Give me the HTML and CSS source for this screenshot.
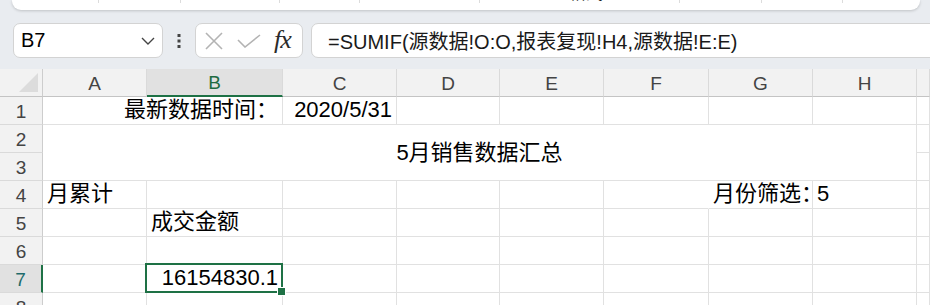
FILE: index.html
```html
<!DOCTYPE html>
<html lang="zh-CN">
<head>
  <meta charset="UTF-8">
  <title>报表复现</title>
<link rel="stylesheet" href="styles.css">
</head>
<body>
<div class="ribbon">
  <div class="group g-1"></div>
  <div class="group g-2"></div>
  <div class="group g-3"></div>
  <div class="group g-4"></div>
  <div class="group g-5"></div>
  <div class="group g-6"><span class="group-label">格式</span></div>
  <div class="group g-7"></div>
  <div class="group g-8"></div>
</div>

<div class="fbar">
  <div class="namebox">
    <span>B7</span>
    <svg class="chevron" width="14" height="8" viewBox="0 0 14 8"><path d="M1 1l6 6 6-6" fill="none" stroke="#444" stroke-width="1.4"/></svg>
  </div>
  <div class="more">
    <svg width="4" height="14" viewBox="0 0 4 14"><rect x="0.5" y="0" width="3" height="3" fill="#444"/><rect x="0.5" y="5.5" width="3" height="3" fill="#444"/><rect x="0.5" y="11" width="3" height="3" fill="#444"/></svg>
  </div>
  <div class="fxbox">
    <svg class="cancel" width="18" height="18" viewBox="0 0 18 18"><path d="M1 1l16 16M17 1L1 17" fill="none" stroke="#b3b3b3" stroke-width="1.6"/></svg>
    <svg class="enter" width="24" height="14" viewBox="0 0 24 14"><path d="M1 6l7 7L23 1" fill="none" stroke="#b3b3b3" stroke-width="1.6"/></svg>
    <span class="fx">fx</span>
  </div>
  <div class="formula">=SUMIF(源数据!O:O,报表复现!H4,源数据!E:E)</div>
</div>

<div class="sheet">
  <div class="corner"></div>
  <div class="colhead">A</div>
  <div class="colhead active">B</div>
  <div class="colhead">C</div>
  <div class="colhead">D</div>
  <div class="colhead">E</div>
  <div class="colhead">F</div>
  <div class="colhead">G</div>
  <div class="colhead">H</div>
  <div class="colhead"></div>

  <div class="rowhead">1</div>
  <div class="cell right span-2">最新数据时间：</div>
  <div class="cell right">2020/5/31</div>
  <div class="cell"></div><div class="cell"></div><div class="cell"></div><div class="cell"></div><div class="cell"></div><div class="cell"></div>

  <div class="rowhead">2</div>
  <div class="cell title">5月销售数据汇总</div>
  <div class="cell"></div>
  <div class="rowhead">3</div>
  <div class="cell"></div>

  <div class="rowhead">4</div>
  <div class="cell">月累计</div>
  <div class="cell"></div><div class="cell"></div><div class="cell"></div><div class="cell"></div>
  <div class="cell open"></div>
  <div class="cell">月份筛选：</div>
  <div class="cell">5</div>
  <div class="cell"></div>

  <div class="rowhead">5</div>
  <div class="cell"></div>
  <div class="cell">成交金额</div>
  <div class="cell"></div><div class="cell"></div><div class="cell"></div><div class="cell"></div><div class="cell"></div><div class="cell"></div><div class="cell"></div>

  <div class="rowhead">6</div>
  <div class="cell"></div><div class="cell"></div><div class="cell"></div><div class="cell"></div><div class="cell"></div><div class="cell"></div><div class="cell"></div><div class="cell"></div><div class="cell"></div>

  <div class="rowhead active">7</div>
  <div class="cell"></div>
  <div class="cell right selected">16154830.1</div>
  <div class="cell"></div><div class="cell"></div><div class="cell"></div><div class="cell"></div><div class="cell"></div><div class="cell"></div><div class="cell"></div>

  <div class="rowhead">8</div>
  <div class="cell"></div><div class="cell"></div><div class="cell"></div><div class="cell"></div><div class="cell"></div><div class="cell"></div><div class="cell"></div><div class="cell"></div><div class="cell"></div>
</div>
</body>
</html>
```

FILE: styles.css
```css
* {
  box-sizing: border-box;
}
html, body {
  margin: 0;
  width: 930px;
  height: 305px;
  overflow: hidden;
}
body {
  background: #e9ecf0;
  font-family: "Liberation Sans", "Noto Sans CJK SC", sans-serif;
  color: #000;
}

/* ribbon edge */
.ribbon {
  display: flex;
  height: 10px;
  margin: 0 10px 0 12px;
  background: #fff;
  border-radius: 0 0 9px 9px;
  box-shadow: 0 1px 3px rgba(0, 0, 0, .18);
  overflow: hidden;
}
.group {
  height: 3px;
  border-right: 1px solid #dcdcdc;
}
.g-1 { width: 87px; }
.g-2 { width: 82px; }
.g-3 { width: 99px; }
.g-4 { width: 80px; }
.g-5 { width: 120px; }
.g-6 { width: 200px; padding-left: 89px; }
.g-7 { width: 82px; }
.g-8 { width: 81px; }
.group-label {
  display: block;
  margin-top: -15px;
  font-size: 17px;
  line-height: 18px;
  color: #222;
}

/* formula bar */
.fbar {
  display: flex;
  align-items: center;
  padding: 13px 0 11px 13px;
}
.namebox, .fxbox, .formula {
  height: 35px;
  background: #fff;
  border: 1px solid #d3d3d3;
  border-radius: 7px;
  display: flex;
  align-items: center;
}
.namebox {
  width: 150px;
  padding: 0 7px;
  justify-content: space-between;
  font-size: 20px;
}
.chevron {
  margin-top: 1px;
}
.more {
  width: 32px;
  display: flex;
  justify-content: center;
}
.fxbox {
  width: 108px;
  padding-left: 9px;
}
.cancel {
  margin-right: 14px;
}
.enter {
  margin-right: 13px;
}
.fx {
  font-family: "Liberation Serif", serif;
  font-style: italic;
  font-size: 26px;
  color: #2b2b2b;
  letter-spacing: -1px;
  margin-top: -2px;
}
.formula {
  flex: 1;
  margin-left: 8px;
  margin-right: -20px;
  padding-left: 16px;
  font-size: 20px;
  color: #1a1a1a;
}

/* sheet grid */
.sheet {
  display: grid;
  grid-template-columns: 43px 104px 136px 114px 103px 104px 105px 104px 104px 1fr;
  grid-auto-rows: 28px;
  background: #fff;
}
.corner, .colhead, .rowhead {
  background: #f2f2f2;
  color: #444;
  font-size: 19px;
  display: flex;
  align-items: center;
  justify-content: center;
}
.corner {
  position: relative;
  border-right: 1px solid #cdcdcd;
  border-bottom: 1px solid #c4c4c4;
}
.corner::after {
  content: '';
  position: absolute;
  right: 4px;
  bottom: 4px;
  width: 19px;
  height: 19px;
  background: #dcdcdc;
  clip-path: polygon(100% 0, 100% 100%, 0 100%);
}
.colhead {
  border-right: 1px solid #dadada;
  border-bottom: 1px solid #c4c4c4;
  padding-top: 2px;
}
.colhead.active {
  background: #e1e1e1;
  color: #1e6b41;
  border-bottom: 2px solid #1e7145;
}
.rowhead {
  border-right: 1px solid #cdcdcd;
  border-bottom: 1px solid #dadada;
  padding-top: 2px;
}
.rowhead.active {
  background: #e1e1e1;
  color: #1e6b6b;
  border-right: 2px solid #1e7145;
}
.cell {
  position: relative;
  display: flex;
  align-items: flex-end;
  padding: 0 4px 1px;
  border-right: 1px solid #e1e1e1;
  border-bottom: 1px solid #e1e1e1;
  font-size: 22px;
  line-height: 26px;
  white-space: nowrap;
}
.cell.right {
  justify-content: flex-end;
}
.span-2 {
  grid-column: span 2;
}
.cell.title {
  grid-column: span 8;
  grid-row: span 2;
  align-items: center;
  justify-content: center;
  padding-top: 2px;
}
.cell.open {
  border-right-color: transparent;
}
.selected::after {
  content: '';
  position: absolute;
  left: -2px;
  top: -2px;
  right: -1px;
  bottom: -1px;
  border: 2px solid #1e7145;
}
.selected::before {
  content: '';
  position: absolute;
  right: -4px;
  bottom: -4px;
  width: 7px;
  height: 7px;
  background: #1e7145;
  border: 1px solid #fff;
  z-index: 1;
}
```
